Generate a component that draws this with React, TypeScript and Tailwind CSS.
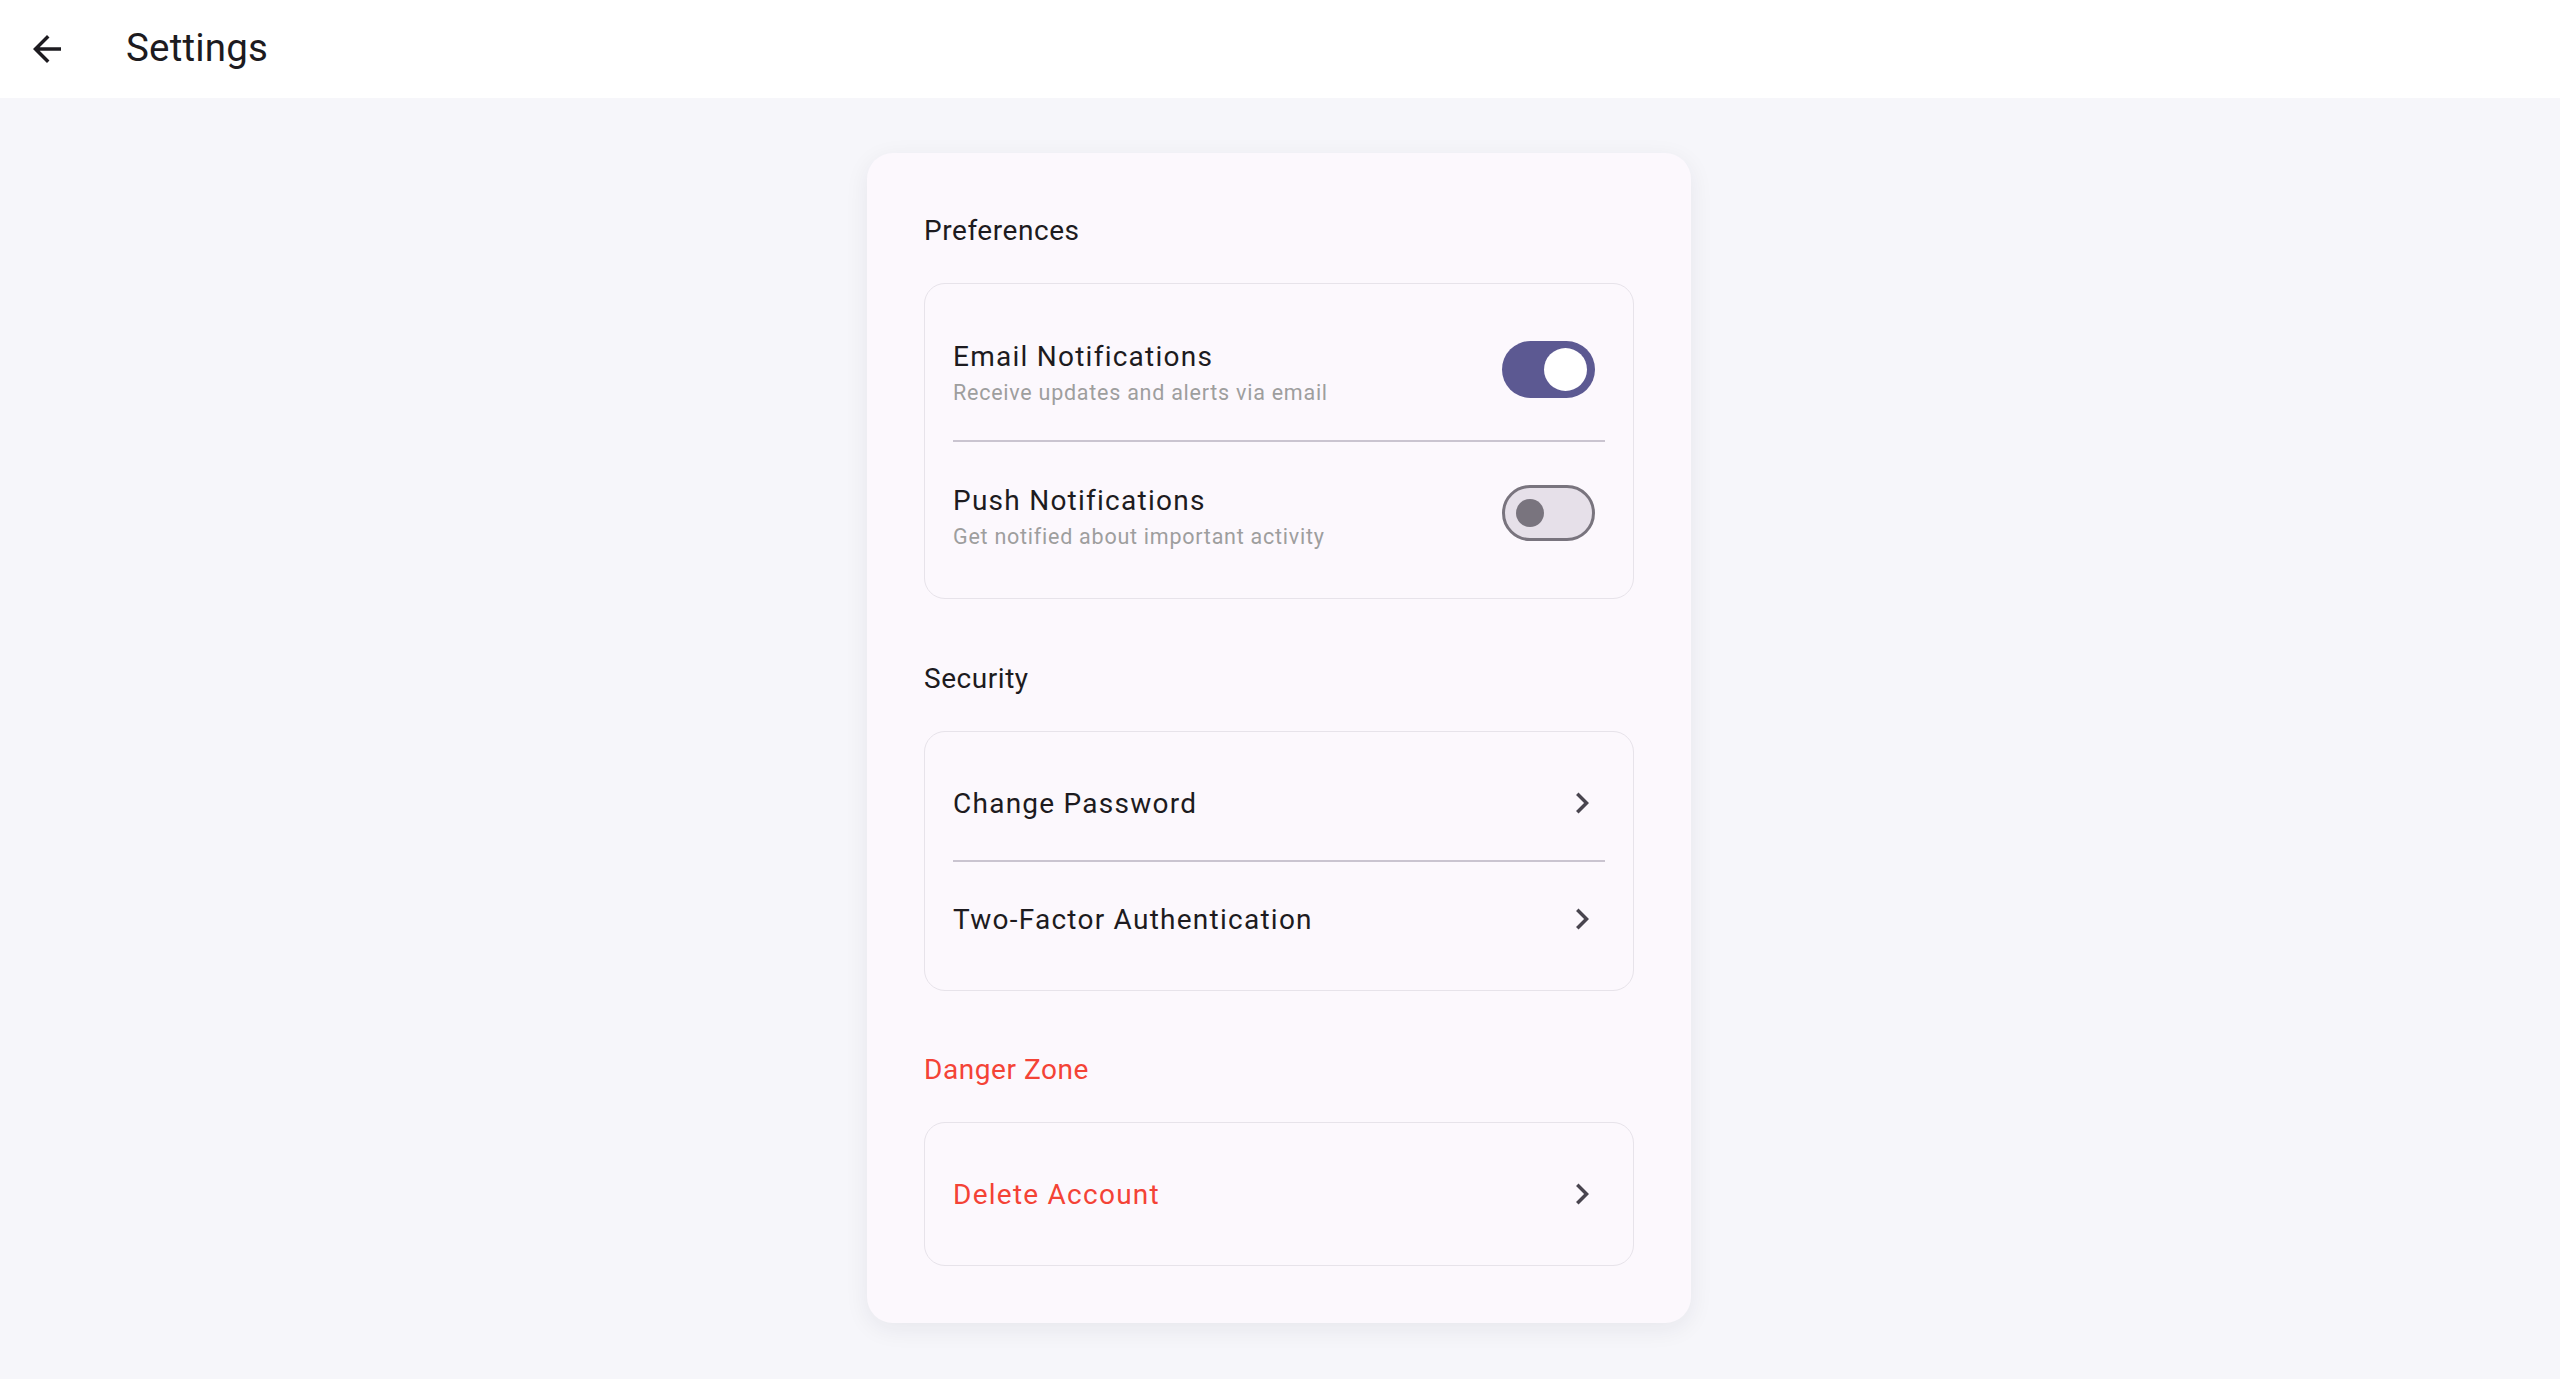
import React from "react";

function Chevron() {
  return (
    <svg width="42" height="42" viewBox="0 0 24 24" className="shrink-0">
      <path d="M10 6L8.59 7.41 13.17 12l-4.58 4.59L10 18l6-6z" fill="#49454f" />
    </svg>
  );
}

function SwitchOn() {
  return (
    <div className="w-[93px] h-[57px] rounded-full bg-[#5c5992] flex items-center justify-end pr-[8px] shrink-0">
      <div className="w-[43px] h-[43px] rounded-full bg-white" />
    </div>
  );
}

function SwitchOff() {
  return (
    <div className="w-[93px] h-[56px] rounded-full bg-[#e6e0e9] border-[3.5px] border-[#79747e] flex items-center pl-[11px] shrink-0">
      <div className="w-[28px] h-[28px] rounded-full bg-[#79747e]" />
    </div>
  );
}

function Divider() {
  return (
    <div className="h-[18px] flex items-center px-[28px]">
      <div className="h-[2px] w-full bg-[#cac4d0]" />
    </div>
  );
}

function SwitchTile({ title, subtitle, on }: { title: string; subtitle: string; on: boolean }) {
  return (
    <div className="h-[126px] flex items-center pl-[28px] pr-[38px]">
      <div className="flex-1 flex flex-col pt-[6px]">
        <div className="text-[28px] leading-[42px] tracking-[1.25px] text-[#1d1b20]">{title}</div>
        <div className="text-[21.5px] leading-[30px] tracking-[0.75px] text-[#9e9e9e]">{subtitle}</div>
      </div>
      {on ? <SwitchOn /> : <SwitchOff />}
    </div>
  );
}

function NavTile({ title, danger }: { title: string; danger?: boolean }) {
  return (
    <div className="h-[98px] flex items-center pl-[28px] pr-[30px]">
      <div
        className={
          "flex-1 pt-[1px] text-[28px] leading-[42px] tracking-[1.25px] " +
          (danger ? "text-[#f44336]" : "text-[#1d1b20]")
        }
      >
        {title}
      </div>
      <Chevron />
    </div>
  );
}

function Section({ title, danger, children }: { title: string; danger?: boolean; children: React.ReactNode }) {
  return (
    <div className="flex flex-col">
      <div
        className={
          "text-[28px] leading-[42px] tracking-[0.55px] mb-[31px] " +
          (danger ? "text-[#f44336]" : "text-[#1d1b20]")
        }
      >
        {title}
      </div>
      <div className="rounded-[21px] border-[1.75px] border-[#e7e3ea] bg-[#fcf8fd] py-[22px]">{children}</div>
    </div>
  );
}

export default function App() {
  return (
    <div className="min-h-screen bg-[#f6f6fa] font-['Roboto',sans-serif]">
      <header className="h-[98px] bg-white flex items-center">
        <div className="w-[98px] h-[98px] flex items-center justify-center pr-[4px]">
          <svg width="42" height="42" viewBox="0 0 24 24">
            <path d="M20 11H7.83l5.59-5.59L12 4l-8 8 8 8 1.41-1.41L7.83 13H20v-2z" fill="#1d1b20" />
          </svg>
        </div>
        <div className="ml-[28px] mb-[3px] text-[38.5px] leading-[49px] tracking-[0.2px] text-[#1d1b20]">Settings</div>
      </header>
      <main className="flex justify-center pt-[55px] pb-[55px] pr-[2px]">
        <div className="w-[824px] rounded-[26px] bg-[#fcf8fd] shadow-[0_6px_24px_rgba(30,30,60,0.07)] p-[57px] flex flex-col">
          <Section title="Preferences">
            <SwitchTile title="Email Notifications" subtitle="Receive updates and alerts via email" on />
            <Divider />
            <SwitchTile title="Push Notifications" subtitle="Get notified about important activity" on={false} />
          </Section>
          <div className="h-[59px]" />
          <Section title="Security">
            <NavTile title="Change Password" />
            <Divider />
            <NavTile title="Two-Factor Authentication" />
          </Section>
          <div className="h-[58px]" />
          <Section title="Danger Zone" danger>
            <NavTile title="Delete Account" danger />
          </Section>
        </div>
      </main>
    </div>
  );
}
